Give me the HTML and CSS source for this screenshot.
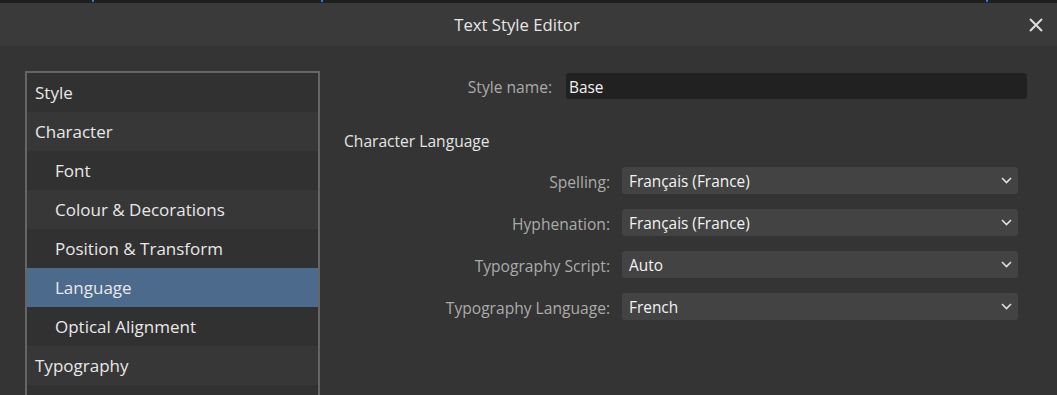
FILE: index.html
```html
<!DOCTYPE html>
<html>
<head>
<meta charset="utf-8">
<link rel="stylesheet" href="styles.css">
</head>
<body>
<div class="topstrip">
  <span class="mark m1"></span>
  <span class="mark m2"></span>
  <span class="mark m3"></span>
</div>
<div class="titlebar">
  <span class="title">Text Style Editor</span>
  <svg class="close" width="14" height="14" viewBox="0 0 14 14"><path d="M1 1L13 13M13 1L1 13" stroke="#dcdcdc" stroke-width="2" fill="none"/></svg>
</div>
<div class="main">
  <div class="list">
    <div class="row dark">Style</div>
    <div class="row light">Character</div>
    <div class="row dark sub">Font</div>
    <div class="row light sub">Colour &amp; Decorations</div>
    <div class="row dark sub">Position &amp; Transform</div>
    <div class="row selected sub">Language</div>
    <div class="row dark sub">Optical Alignment</div>
    <div class="row light">Typography</div>
    <div class="row dark"></div>
  </div>
  <div class="panel">
    <div class="namerow">
      <span class="label">Style name:</span>
      <div class="input">Base</div>
    </div>
    <div class="heading">Character Language</div>
    <div class="fields">
      <span class="label">Spelling:</span>
      <div class="select"><span>Français (France)</span><svg class="chev" width="11" height="7" viewBox="0 0 11 7"><path d="M1 1L5.5 5.5L10 1" stroke="#e0e0e0" stroke-width="1.6" fill="none"/></svg></div>
      <span class="label">Hyphenation:</span>
      <div class="select"><span>Français (France)</span><svg class="chev" width="11" height="7" viewBox="0 0 11 7"><path d="M1 1L5.5 5.5L10 1" stroke="#e0e0e0" stroke-width="1.6" fill="none"/></svg></div>
      <span class="label">Typography Script:</span>
      <div class="select"><span>Auto</span><svg class="chev" width="11" height="7" viewBox="0 0 11 7"><path d="M1 1L5.5 5.5L10 1" stroke="#e0e0e0" stroke-width="1.6" fill="none"/></svg></div>
      <span class="label">Typography Language:</span>
      <div class="select"><span>French</span><svg class="chev" width="11" height="7" viewBox="0 0 11 7"><path d="M1 1L5.5 5.5L10 1" stroke="#e0e0e0" stroke-width="1.6" fill="none"/></svg></div>
    </div>
  </div>
</div>
</body>
</html>
```
FILE: styles.css
```css
html, body {
  margin: 0;
  padding: 0;
}
body {
  width: 1057px;
  height: 395px;
  overflow: hidden;
  background: #343434;
  font-family: "Open Sans", "Noto Sans", sans-serif;
  font-size: 15px;
  color: #e8e8e8;
}
.topstrip {
  height: 3px;
  background: #1e1e1e;
  display: flex;
}
.mark {
  display: block;
  width: 2px;
  height: 2px;
  background: #2a7de0;
}
.m1 { margin-left: 92px; }
.m2 { margin-left: 227px; }
.m3 { margin-left: 663px; }
.titlebar {
  height: 43px;
  background: #3a3a3a;
  display: flex;
  align-items: center;
  justify-content: center;
  padding-right: 23px;
  position: relative;
}
.title {
  font-size: 16.7px;
  color: #e6e6e6;
}
.close {
  position: absolute;
  right: 14px;
  top: 15px;
}
.main {
  display: flex;
  padding-top: 25px;
  height: 324px;
}
.list {
  margin-left: 25px;
  width: 295px;
  border: 2px solid #656565;
  border-bottom: none;
  height: 324px;
  box-sizing: border-box;
  overflow: hidden;
}
.row {
  height: 39px;
  display: flex;
  align-items: center;
  padding-left: 8px;
  font-size: 17px;
  color: #e8e8e8;
}
.row.sub { padding-left: 28px; }
.dark { background: #313131; }
.light { background: #373737; }
.selected { background: #4b6a8c; }
.panel {
  margin-left: 24px;
  width: 683px;
}
.namerow {
  display: grid;
  grid-template-columns: 208px 461px;
  column-gap: 14px;
  align-items: center;
  margin-top: 2px;
}
.label {
  text-align: right;
  color: #ababab;
  font-size: 15.6px;
  padding-top: 2px;
}
.input {
  box-sizing: border-box;
  height: 26px;
  background: #212121;
  border-radius: 3px;
  display: flex;
  align-items: center;
  padding: 2px 0 0 3px;
  color: #f2f2f2;
  font-size: 15.4px;
}
.heading {
  margin-top: 31px;
  height: 22px;
  line-height: 22px;
  font-size: 15.6px;
  color: #e4e4e4;
}
.fields {
  margin-top: 15px;
  display: grid;
  grid-template-columns: 266px 396px;
  column-gap: 12px;
  row-gap: 15px;
  align-items: center;
}
.select {
  box-sizing: border-box;
  height: 27px;
  background: #434343;
  border-radius: 3px;
  display: flex;
  align-items: center;
  justify-content: space-between;
  padding: 0 6px 0 7px;
  color: #f2f2f2;
  font-size: 15.4px;
}
.select span {
  padding-top: 2px;
}
.chev { display: block; }
```
